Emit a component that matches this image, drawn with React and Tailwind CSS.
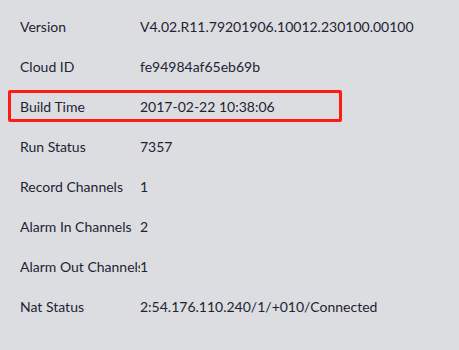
const rows = [
  ['Version', 'V4.02.R11.79201906.10012.230100.00100'],
  ['Cloud ID', 'fe94984af65eb69b'],
  ['Build Time', '2017-02-22 10:38:06', true],
  ['Run Status', '7357'],
  ['Record Channels', '1'],
  ['Alarm In Channels', '2'],
  ['Alarm Out Channels', '1'],
  ['Nat Status', '2:54.176.110.240/1/+010/Connected'],
]

export default function App() {
  return (
    <div
      className="w-[459px] h-[350px] bg-[#dcdde1] pt-[6px] text-[14px] text-[#1c2433]"
      style={{ fontFamily: 'Lato, "Noto Sans", sans-serif' }}
    >
      {rows.map(([label, value, hl]) => (
        <div key={label} className="relative flex items-center h-10 pl-5">
          {hl && (
            <div className="absolute left-[8px] top-[4px] w-[334px] h-[32px] border-[3px] border-[#ff1a14] rounded-[2px]" />
          )}
          <div className="w-[120px] shrink-0 overflow-hidden whitespace-nowrap">{label}</div>
          <div className="whitespace-nowrap">{value}</div>
        </div>
      ))}
    </div>
  )
}
